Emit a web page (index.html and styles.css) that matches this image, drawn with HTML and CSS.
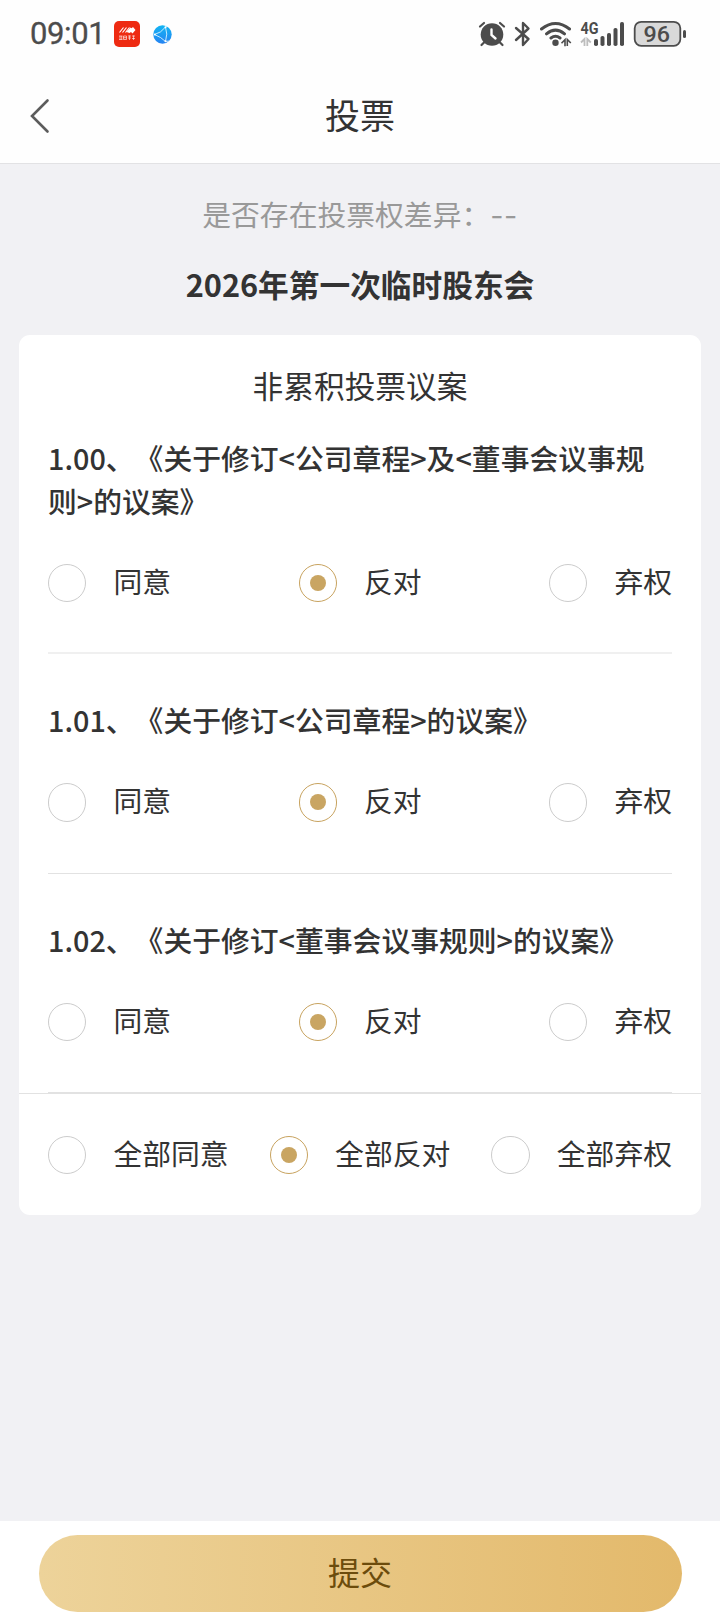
FILE: index.html
```html
<!DOCTYPE html>
<html lang="zh-CN">
<head>
<meta charset="utf-8">
<title>投票</title>
<link rel="stylesheet" href="styles.css">
</head>
<body>
<div class="screen">
  <div class="status">
    <span class="time">09:01</span>
    <svg class="app-red" width="26" height="26" viewBox="0 0 26 26">
      <rect width="26" height="26" rx="5" fill="#ee2b12"/>
      <path d="M5.500 11.500l4-5M8.500 11.500l4-5M11.500 11.500l4-5" stroke="#fff" stroke-width="1.200"/>
      <path d="M12.500 11l4-4.500 1 .8 1.500-1.300 2.500 3-3 3.500-1.500-1.500-1.500 1z" fill="#fff"/>
      <path d="M5 15h3.500M5 18.500h3.500M6 15v3.500M7.700 15v3.500M9.500 15h3v3.500h-3zM9.500 16.700h3M14 15h3M14 17h3M15.500 14.500v4.500M18 15h3M18 17.500h3M19.500 14.500v4.500" stroke="#fff" stroke-width=".7" fill="none" opacity=".85"/>
    </svg>
    <svg class="app-blue" width="19" height="19" viewBox="0 0 19 19">
      <defs><linearGradient id="globe" x1="0" y1="0" x2="0" y2="1"><stop offset="0" stop-color="#12b5f3"/><stop offset="1" stop-color="#2583f2"/></linearGradient></defs>
      <circle cx="9.500" cy="9.500" r="9.200" fill="url(#globe)"/>
      <path d="M1.500 9.500Q8 8 12.500 2M1.500 9.500Q8 12 12.500 16.500M12.500 2Q15 9 12.500 16.500M12.500 2l1.500-1M12.500 16.500l3.500-.5" stroke="#d8f3ff" stroke-width=".9" fill="none"/>
      <circle cx="12.500" cy="2.300" r="1" fill="#fff"/><circle cx="12.500" cy="16.300" r="1" fill="#fff"/><circle cx="1.800" cy="9.500" r="1" fill="#fff"/>
    </svg>
    <svg class="indicators" width="230" height="30" viewBox="470 19 230 30">
      <g fill="none" stroke="#4c4c4c" stroke-width="2.200" stroke-linecap="round">
        <circle cx="492" cy="34.500" r="11.300" fill="#4c4c4c" stroke="none"/>
        <path d="M480 26.500l4-3.500M504 26.500l-4-3.500M484.500 42l-3 3M499.500 42l3 3"/>
        <path d="M491.500 29.500v5.500l4 3.500" stroke="#fff" stroke-width="2.400"/>
        <path d="M516 28l12.500 11-5.500 6V23l5.500 5.500L516 40" stroke-width="2.400" stroke-linejoin="round"/>
        <path d="M541.500 29Q555.500 18 569.500 29M546.500 33.800Q555.500 26.500 564.500 33.800M551 38Q555.500 34.500 560 38" stroke-width="3"/>
      </g>
      <circle cx="555.500" cy="42.800" r="3.200" fill="#4c4c4c"/>
      <path d="M561.500 43.200l3.500-3.500v6.500M567.300 46v-6.500l3.500 3.500" stroke="#4c4c4c" stroke-width="1.600" fill="none"/>
      <path d="M581 42.500l3.500-3.500v7M587.300 46v-7l3.500 3.500" stroke="#bdbdbd" stroke-width="1.800" fill="none"/>
      <g fill="#4c4c4c"><rect x="594" y="39" width="4" height="7" rx="1.800"/><rect x="600.500" y="36" width="4" height="10" rx="1.800"/><rect x="607" y="33" width="4" height="13" rx="1.800"/><rect x="613.500" y="28" width="4" height="18" rx="1.800"/><rect x="620" y="22" width="4" height="24" rx="1.800"/></g>
      <text class="net" x="580.500" y="34" textLength="18" lengthAdjust="spacingAndGlyphs">4G</text>
      <rect x="634.700" y="21.800" width="45.600" height="24" rx="6.500" fill="#d9d9d9" stroke="#4c4c4c" stroke-width="1.800"/>
      <rect x="683" y="30" width="3" height="8" rx="1.500" fill="#4c4c4c"/>
      <text class="battery" x="643.500" y="41.800" textLength="26.500" lengthAdjust="spacingAndGlyphs">96</text>
    </svg>
  </div>
  <header class="nav">
    <svg class="back" width="22" height="36" viewBox="0 0 22 36"><path d="M18.500 2.500L3 18l15.500 15.500" fill="none" stroke="#5c5c5c" stroke-width="2.600" stroke-linecap="round"/></svg>
    <h1 class="title">投票</h1>
  </header>
  <main class="content">
    <p class="diff">是否存在投票权差异：<span class="dash">--</span></p>
    <h2 class="meeting">2026年第一次临时股东会</h2>
    <section class="card">
      <h3 class="group">非累积投票议案</h3>
      <article class="item first">
        <p class="name">1.00、《关于修订&lt;公司章程&gt;及&lt;董事会议事规则&gt;的议案》</p>
        <div class="options">
          <label class="option"><i class="radio"></i><span class="label">同意</span></label>
          <label class="option"><i class="radio on"></i><span class="label">反对</span></label>
          <label class="option"><i class="radio"></i><span class="label">弃权</span></label>
        </div>
      </article>
      <article class="item">
        <p class="name">1.01、《关于修订&lt;公司章程&gt;的议案》</p>
        <div class="options">
          <label class="option"><i class="radio"></i><span class="label">同意</span></label>
          <label class="option"><i class="radio on"></i><span class="label">反对</span></label>
          <label class="option"><i class="radio"></i><span class="label">弃权</span></label>
        </div>
      </article>
      <article class="item">
        <p class="name">1.02、《关于修订&lt;董事会议事规则&gt;的议案》</p>
        <div class="options">
          <label class="option"><i class="radio"></i><span class="label">同意</span></label>
          <label class="option"><i class="radio on"></i><span class="label">反对</span></label>
          <label class="option"><i class="radio"></i><span class="label">弃权</span></label>
        </div>
      </article>
      <div class="options all">
        <label class="option"><i class="radio"></i><span class="label">全部同意</span></label>
        <label class="option"><i class="radio on"></i><span class="label">全部反对</span></label>
        <label class="option"><i class="radio"></i><span class="label">全部弃权</span></label>
      </div>
    </section>
  </main>
  <footer class="footer"><button class="submit">提交</button></footer>
</div>
</body>
</html>
```
FILE: styles.css
```css
* { box-sizing: border-box; margin: 0; padding: 0; }
body {
  background: #f1f1f4;
  color: #333;
  font-family: "Noto Sans CJK SC", sans-serif;
  font-size: 28.8px;
  text-spacing-trim: space-all;
}
.screen { display: flex; flex-direction: column; width: 720px; height: 1612px; overflow: hidden; }
.status { display: flex; align-items: center; height: 68px; padding-left: 30px; background: #fefefe; color: #4c4c4c; }
.time { width: 84px; padding-bottom: 0; font: 400 31px/36px Roboto, sans-serif; letter-spacing: -0.4px; white-space: nowrap; -webkit-text-stroke: 0.3px #4c4c4c; }
.app-blue { margin-left: 13px; }
.indicators { margin-left: 298px; }
.net { font: 700 16px Roboto, sans-serif; fill: #4c4c4c; }
.battery { font: 500 22.5px Roboto, sans-serif; fill: #4c4c4c; }
.nav { display: grid; grid-template-columns: 100px 1fr 100px; align-items: center; height: 96px; background: #fefefe; border-bottom: 1px solid #e2e2e4; }
.back { margin-left: 29px; }
.title { padding-bottom: 3px; text-align: center; font-size: 35px; font-weight: 400; line-height: 50px; }
.content { flex: 1; padding: 0 19px; }
.diff { height: 43px; margin-top: 28px; line-height: 43px; text-align: center; color: #999; }
.dash { font-family: Inter, sans-serif; line-height: 1; letter-spacing: 0.5px; }
.meeting { margin-top: 26px; line-height: 46px; text-align: center; font-size: 30.7px; font-weight: 700; }
.card { height: 880px; margin-top: 28px; padding-top: 27px; border-radius: 11px; background: #fff; }
.group { line-height: 46px; text-align: center; font-size: 30.7px; font-weight: 400; }
.item { height: 219.500px; margin: 0 29px; padding-top: 44.400px; border-bottom: 1px solid #e2e2e2; }
.item.first { height: 246px; padding-top: 28px; border-bottom: 2px solid #f0f0f0; }
.name { margin-bottom: 41.600px; line-height: 43.200px; font-weight: 500; }
.options { display: flex; justify-content: space-between; }
.option { display: flex; align-items: center; gap: 27px; height: 38.400px; line-height: 38px; white-space: nowrap; }
.label { padding-bottom: 4px; }
.radio { display: grid; place-items: center; width: 38.400px; height: 38.400px; border: 1.500px solid #ccc; border-radius: 50%; }
.radio.on { border-color: #c8a35f; }
.radio.on::after { content: ""; width: 16px; height: 16px; border-radius: 50%; background: #c9a562; }
.all { padding: 42px 29px 0; border-top: 1px solid #e2e2e2; }
.footer { height: 91px; padding: 14px 38.500px 0; background: #fff; }
.submit { display: block; width: 100%; height: 77px; padding-bottom: 5px; border: 0; border-radius: 39px; background: linear-gradient(90deg, #edd39a, #e3b96b); color: #6c4c0c; font: 400 32px/70px "Noto Sans CJK SC", sans-serif; }
```
